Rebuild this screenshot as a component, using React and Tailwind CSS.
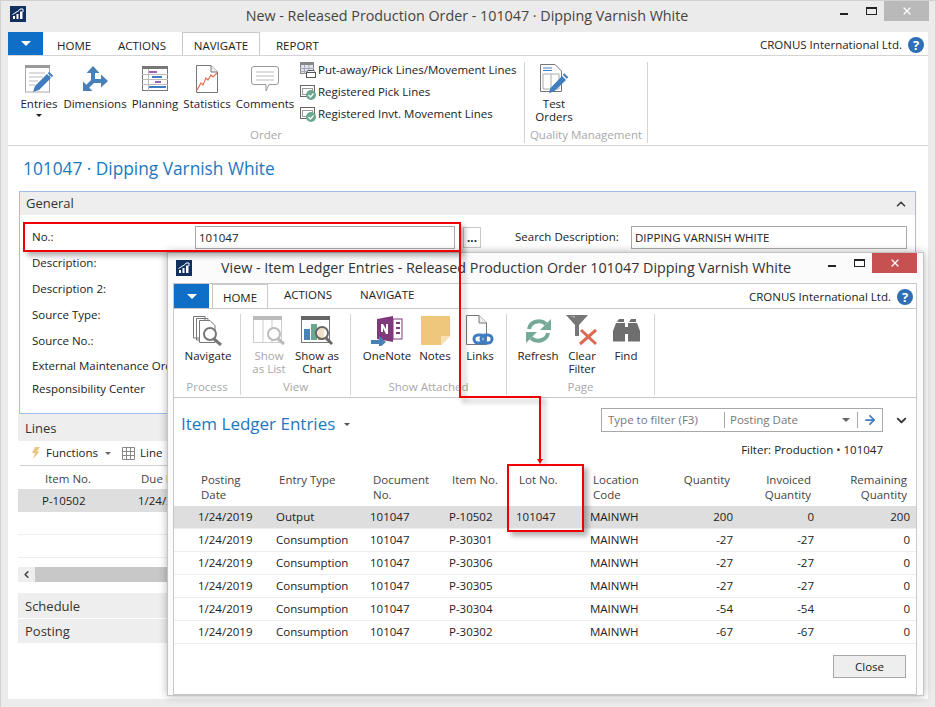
import { ChevronDown, ChevronUp, ChevronLeft, ArrowRight, X } from 'lucide-react';

const ROWS = [
  ['1/24/2019', 'Output', '101047', 'P-10502', '101047', 'MAINWH', '200', '0', '200'],
  ['1/24/2019', 'Consumption', '101047', 'P-30301', '', 'MAINWH', '-27', '-27', '0'],
  ['1/24/2019', 'Consumption', '101047', 'P-30306', '', 'MAINWH', '-27', '-27', '0'],
  ['1/24/2019', 'Consumption', '101047', 'P-30305', '', 'MAINWH', '-27', '-27', '0'],
  ['1/24/2019', 'Consumption', '101047', 'P-30304', '', 'MAINWH', '-54', '-54', '0'],
  ['1/24/2019', 'Consumption', '101047', 'P-30302', '', 'MAINWH', '-67', '-67', '0'],
];

const COLS = 'grid grid-cols-[78px_94px_79px_67px_74px_60px_83px_81px_96px] pl-[24px]';

function Logo() {
  return (
    <svg width="16" height="16" viewBox="0 0 16 16">
      <rect width="16" height="16" fill="#12305f" />
      <path d="M3 13V10H5V13ZM6.5 13V8H8.5V13ZM10 13V5.5H12.5V13Z" fill="#fff" />
      <path d="M2.5 8.5L9 4.5L10 3H13V6" stroke="#fff" strokeWidth="1" fill="none" />
    </svg>
  );
}

function Help() {
  return (
    <div className="w-4 h-4 rounded-full bg-[#2f6fb5] text-white text-[13px] font-bold leading-4 text-center">?</div>
  );
}

function WindowButtons({ closeColor }) {
  return (
    <div className="flex items-start h-[21px]">
      <div className="w-[8px] h-[2px] bg-[#222] mt-[12px] mr-[18px]" />
      <div className="w-[11px] h-[8px] border border-[#222] border-t-2 mt-[6px] mr-[7px]" />
      <div className={`${closeColor} w-[45px] h-[20px] flex items-center justify-center`}>
        <X size={12} strokeWidth={2.5} className="text-white" />
      </div>
    </div>
  );
}

function Entries() {
  return (
    <svg width="30" height="30" viewBox="0 0 30 30">
      <rect x="1.5" y="2" width="24" height="26" fill="#fff" stroke="#aaa" />
      <rect x="1" y="1" width="25" height="3" fill="#9a9a9a" />
      <path d="M5 9H21M5 13H19M5 17H14M5 21H11" stroke="#bbb" />
      <path d="M9 28L11 22L23 10L27 14L15 26Z" fill="#3f7cc0" />
      <path d="M24.5 8.5L28.5 12.5" stroke="#3f7cc0" strokeWidth="2" />
    </svg>
  );
}

function Dimensions() {
  return (
    <svg width="25" height="25" viewBox="0 0 25 25" fill="#4a80b8">
      <path d="M10 16V5M10 15H20M10 15L3 22" stroke="#4a80b8" strokeWidth="4" />
      <path d="M3.5 7L10 0L16.5 7Z" />
      <path d="M18 8.5L25 15L18 21.5Z" />
      <path d="M0 15.5V25H9.5Z" />
    </svg>
  );
}

function Planning() {
  return (
    <svg width="26" height="25" viewBox="0 0 26 25">
      <rect x="0.5" y="0.5" width="25" height="24" fill="#fff" stroke="#777" />
      <rect width="26" height="3" fill="#777" />
      <path d="M6.5 3V25M0 8.5H26M0 13.5H26M0 18.5H26" stroke="#bbb" />
      <rect x="7" y="5" width="8" height="2" fill="#9b62b8" />
      <rect x="10" y="10" width="10" height="2" fill="#3f7cc0" />
      <rect x="13" y="15" width="6" height="2" fill="#9b62b8" />
      <rect x="7" y="20" width="17" height="2" fill="#3f7cc0" />
    </svg>
  );
}

function Statistics() {
  return (
    <svg width="22" height="28" viewBox="0 0 22 28">
      <path d="M0.5 0.5H15L21.5 7V27.5H0.5Z" fill="#fff" stroke="#777" />
      <path d="M15 0.5V7H21.5" fill="#eee" stroke="#777" />
      <path d="M1 25L5 18L7 20L10 13L12 15L15 10L17 12L21 8" fill="none" stroke="#e07050" strokeWidth="1.2" />
    </svg>
  );
}

function Comments() {
  return (
    <svg width="28" height="26" viewBox="0 0 28 26">
      <path d="M3 0.5H25Q27.5 0.5 27.5 3V16Q27.5 18.5 25 18.5H18L15 25V18.5H3Q0.5 18.5 0.5 16V3Q0.5 0.5 3 0.5Z" fill="#fff" stroke="#999" />
      <path d="M5 6H23M5 10H23M5 14H23" stroke="#bbb" />
    </svg>
  );
}

function TestOrders() {
  return (
    <svg width="28" height="30" viewBox="0 0 28 30">
      <path d="M0.5 0.5H15L21.5 7V27.5H0.5Z" fill="#fff" stroke="#777" />
      <path d="M3 4H12M3 6.5H12" stroke="#3f7cc0" />
      <path d="M3 10H19V25H3ZM11 10V25" fill="none" stroke="#aaa" />
      <path d="M9 29L10.5 24L22 12L26 16L14 27.5Z" fill="#3f7cc0" />
      <path d="M23.5 10L27.5 14" stroke="#3f7cc0" strokeWidth="2" />
    </svg>
  );
}

function PutAway() {
  return (
    <svg width="16" height="16" viewBox="0 0 16 16">
      <rect x="0.5" y="0.5" width="13" height="11" fill="#dfe3ee" stroke="#888" />
      <rect width="14" height="3" fill="#888" />
      <path d="M4.5 3V12M9 3V12M0 6.5H14M0 9.5H14" stroke="#a9a9b8" />
      <rect x="6.5" y="10.5" width="9" height="5" fill="#fff" stroke="#555" />
      <rect x="8" y="8.5" width="6" height="2" fill="#fff" stroke="#555" />
    </svg>
  );
}

function Registered() {
  return (
    <svg width="16" height="16" viewBox="0 0 16 16">
      <rect x="0.5" y="1.5" width="14" height="11" fill="#fff" stroke="#666" />
      <rect x="2.5" y="4.5" width="10" height="6" fill="#fff" stroke="#999" />
      <circle cx="11" cy="11" r="5" fill="#6aa88f" />
      <path d="M8.5 11L10.5 13L13.5 9.5" fill="none" stroke="#fff" strokeWidth="1.2" />
    </svg>
  );
}

function Navigate() {
  return (
    <svg width="30" height="30" viewBox="0 0 30 30">
      <path d="M0.5 0.5H12V22H0.5ZM3.5 2.5H15V24H3.5Z" fill="#fff" stroke="#777" />
      <path d="M6.5 4.5H17L22 9.5V26.5H6.5Z" fill="#fff" stroke="#777" />
      <circle cx="17" cy="18" r="6" fill="#fff" stroke="#777" strokeWidth="2" />
      <path d="M21 23L28 29" stroke="#777" strokeWidth="3" />
    </svg>
  );
}

function ShowList() {
  return (
    <svg width="32" height="30" viewBox="0 0 32 30">
      <rect x="0.5" y="0.5" width="28" height="26" fill="#fff" stroke="#ccc" />
      <rect width="29" height="4" fill="#bbb" />
      <path d="M10 4V27M19 4V27" stroke="#ccc" />
      <circle cx="21" cy="18" r="6" fill="#fff" stroke="#bbb" strokeWidth="2" />
      <path d="M25 23L31 28" stroke="#bbb" strokeWidth="3" />
    </svg>
  );
}

function ShowChart() {
  return (
    <svg width="32" height="30" viewBox="0 0 32 30">
      <rect x="0.5" y="0.5" width="28" height="26" fill="#fff" stroke="#777" />
      <rect width="29" height="4" fill="#666" />
      <rect x="3" y="13" width="6" height="11" fill="#4a80b8" />
      <rect x="10" y="8" width="6" height="16" fill="#6aa88f" />
      <rect x="17" y="11" width="6" height="13" fill="#d8a55a" />
      <circle cx="21" cy="17" r="6" fill="#ffffffaa" stroke="#666" strokeWidth="2" />
      <path d="M25 22L31 28" stroke="#666" strokeWidth="3" />
    </svg>
  );
}

function OneNote() {
  return (
    <svg width="32" height="30" viewBox="0 0 32 30">
      <path d="M6 3L22 0V26L6 23Z" fill="#80397b" />
      <path d="M10 16V8H12L15 13V8H17V18H15L12 12V16Z" fill="#fff" />
      <rect x="22" y="3" width="9" height="20" fill="#fff" stroke="#80397b" />
      <path d="M25 7H29M25 12H29M25 17H29" stroke="#80397b" strokeWidth="2" />
      <path d="M0 24H8V20L15 26L8 32V28H0Z" fill="#4a80b8" />
    </svg>
  );
}

function Notes() {
  return (
    <svg width="29" height="29" viewBox="0 0 29 29">
      <path d="M0 0H29V20L20 29H0Z" fill="#eec77c" />
      <path d="M20 29V20H29Z" fill="#f8e2b4" />
    </svg>
  );
}

function Links() {
  return (
    <svg width="28" height="32" viewBox="0 0 28 32">
      <path d="M0.5 0.5H13L20.5 8V29.5H0.5Z" fill="#fff" stroke="#777" />
      <path d="M13 0.5V8H20.5" fill="#eee" stroke="#777" />
      <rect x="8" y="20" width="11" height="8" rx="4" fill="none" stroke="#3f7cc0" strokeWidth="3" />
      <rect x="15" y="20" width="11" height="8" rx="4" fill="none" stroke="#3f7cc0" strokeWidth="3" />
    </svg>
  );
}

function Refresh() {
  return (
    <svg width="27" height="26" viewBox="0 0 27 26">
      <path d="M4 11A10 9 0 0 1 21 6" fill="none" stroke="#74aa97" strokeWidth="4" />
      <path d="M23 15A10 9 0 0 1 6 20" fill="none" stroke="#74aa97" strokeWidth="4" />
      <path d="M26 1V12H15Z" fill="#74aa97" />
      <path d="M1 25V14H12Z" fill="#74aa97" />
    </svg>
  );
}

function ClearFilter() {
  return (
    <svg width="32" height="31" viewBox="0 0 32 31">
      <path d="M0 0H22L13 10V21H9V10Z" fill="#777" />
      <path d="M4 1H9V3Z" fill="#aaa" />
      <path d="M14 29L30 15M15 15L30 29" stroke="#dd6a50" strokeWidth="3" />
    </svg>
  );
}

function Find() {
  return (
    <svg width="27" height="24" viewBox="0 0 27 24" fill="#6e6e6e">
      <path d="M4 3H11V0H6ZM16 3H23V0H18Z" />
      <path d="M3 4H12V22.5H0V12ZM15 4H24L27 12V22.5H15ZM12 8H15V15H12Z" />
    </svg>
  );
}

function Big({ w, icon, label, muted, caret }) {
  return (
    <div className={`${w} flex flex-col items-center shrink-0`}>
      <div className="h-[31px] flex items-center justify-center">{icon}</div>
      <div className={`mt-[3px] text-center leading-[13px] whitespace-nowrap ${muted ? 'text-[#a8a8a8]' : 'text-[#222]'}`}>{label}</div>
      {caret && <div className="mt-[4px] w-0 h-0 border-x-[3px] border-x-transparent border-t-[3px] border-t-[#222]" />}
    </div>
  );
}

function Group({ w, pl, label, children }) {
  return (
    <div className={`${w} shrink-0 h-full border-r border-[#d4d4d4] flex flex-col`}>
      <div className={`${pl} flex flex-1 pt-[1px]`}>{children}</div>
      <div className="text-center text-[#a8a8a8] leading-[15px] pb-[1px] whitespace-nowrap">{label}</div>
    </div>
  );
}

function SmallAction({ icon, label }) {
  return (
    <div className="flex items-center h-[22px] text-[#222]">
      <span className="w-[18px] shrink-0">{icon}</span>
      <span className="whitespace-nowrap">{label}</span>
    </div>
  );
}

function FormRow({ label, h = 'h-[26px]', children }) {
  return (
    <div className={`${h} flex items-center text-[#222]`}>
      <div className="w-[164px] pl-[1px] whitespace-nowrap overflow-hidden">{label}</div>
      {children}
    </div>
  );
}

function ItemLedgerWindow() {
  return (
    <div className="absolute left-[166px] top-[251px] w-[757px] h-[444px] bg-[#fbfbfb] border border-[#c4c4c4] shadow-[0_0_8px_rgba(0,0,0,0.3)] flex flex-col">
      <div className="h-[30px] flex justify-between shrink-0">
        <div className="flex items-center pl-[8px]">
          <Logo />
          <span className="ml-[29px] text-[14.3px] text-[#333] whitespace-nowrap">View - Item Ledger Entries - Released Production Order 101047 Dipping Varnish White</span>
        </div>
        <div className="pr-[6px]"><WindowButtons closeColor="bg-[#c75050]" /></div>
      </div>
      <div className="ml-[5px] mr-[6px] flex-1 border border-[#c8c8c8] bg-white flex flex-col">
        <div className="h-[24px] flex items-end justify-between shrink-0">
          <div className="flex items-end h-full">
            <div className="w-[35px] h-full bg-[#0f6fc6] flex items-center justify-center">
              <div className="w-0 h-0 border-x-[5px] border-x-transparent border-t-[5px] border-t-white" />
            </div>
            <div className="ml-[3px] w-[56px] h-full bg-white border border-b-0 border-[#c8c8c8] text-center leading-[26px] text-[#222]">HOME</div>
            <div className="ml-[16px] w-[49px] whitespace-nowrap leading-[26px] text-[#222]">ACTIONS</div>
            <div className="ml-[27px] whitespace-nowrap leading-[26px] text-[#222]">NAVIGATE</div>
          </div>
          <div className="flex items-center h-full pt-[2px] pr-[3px] text-[#222]">
            <span className="mr-[6px]">CRONUS International Ltd.</span>
            <Help />
          </div>
        </div>
        <div className="h-[90px] shrink-0 border-y border-[#c8c8c8] flex pt-[5px] pb-[2px]">
          <Group w="w-[67px]" pl="pl-[10px]" label="Process">
            <Big w="w-[48px]" icon={<Navigate />} label="Navigate" />
          </Group>
          <Group w="w-[110px]" pl="pl-[4px]" label="View">
            <Big w="w-[48px]" muted icon={<ShowList />} label={<>Show<br />as List</>} />
            <Big w="w-[48px]" icon={<ShowChart />} label={<>Show as<br />Chart</>} />
          </Group>
          <Group w="w-[156px]" pl="pl-[12px]" label="Show Attached">
            <Big w="w-[48px]" icon={<OneNote />} label="OneNote" />
            <Big w="w-[48px]" icon={<Notes />} label="Notes" />
            <Big w="w-[42px]" icon={<Links />} label="Links" />
          </Group>
          <Group w="w-[148px]" pl="pl-[8px]" label="Page">
            <Big w="w-[46px]" icon={<Refresh />} label="Refresh" />
            <Big w="w-[42px]" icon={<ClearFilter />} label={<>Clear<br />Filter</>} />
            <Big w="w-[46px]" icon={<Find />} label="Find" />
          </Group>
        </div>
        <div className="flex items-center justify-between h-[24px] mt-[10px] shrink-0">
          <div className="flex items-center pl-[7px] pt-[8px]">
            <span className="text-[17px] text-[#1c78c0] leading-[24px]">Item Ledger Entries</span>
            <div className="ml-[9px] w-0 h-0 border-x-[3px] border-x-transparent border-t-[3px] border-t-[#555]" />
          </div>
          <div className="flex items-center pr-[7px]">
            <div className="w-[282px] h-[24px] border border-[#a8a8a8] flex items-center text-[#777]">
              <span className="w-[123px] pl-[6px] border-r border-[#a8a8a8] leading-[16px] whitespace-nowrap">Type to filter (F3)</span>
              <span className="w-[133px] pl-[5px] border-r border-[#a8a8a8] leading-[16px] flex items-center justify-between pr-[7px]">
                Posting Date
                <span className="w-0 h-0 border-x-[4px] border-x-transparent border-t-[4px] border-t-[#666]" />
              </span>
              <ArrowRight size={14} strokeWidth={3} className="ml-[5px] text-[#3f7cc0]" />
            </div>
            <ChevronDown size={15} strokeWidth={3} className="ml-[11px] text-[#333]" />
          </div>
        </div>
        <div className="h-[18px] mt-[9px] mb-[13px] pr-[33px] text-right leading-[18px] text-[#222] shrink-0">Filter: Production • 101047</div>
        <div className={`${COLS} h-[34px] leading-[15px] text-[#444] shrink-0`}>
          <div className="pl-[3px]">Posting<br />Date</div>
          <div className="pl-[3px]">Entry Type</div>
          <div className="pl-[3px]">Document<br />No.</div>
          <div className="pl-[3px]">Item No.</div>
          <div className="pl-[3px]">Lot No.</div>
          <div className="pl-[3px]">Location<br />Code</div>
          <div className="pr-[3px] text-right">Quantity</div>
          <div className="pr-[3px] text-right">Invoiced<br />Quantity</div>
          <div className="pr-[3px] text-right">Remaining<br />Quantity</div>
        </div>
        <div className="shrink-0">
          {ROWS.map((r, i) => (
            <div key={r[3]} className={`${COLS} h-[23px] items-center border-b border-[#eeeeee] text-[#222] ${i === 0 ? 'bg-[#dedede]' : ''}`}>
              {r.map((c, j) => (
                <div key={j} className={j > 5 ? 'text-right' : ''}>{c}</div>
              ))}
            </div>
          ))}
        </div>
        <div className="flex justify-end pr-[10px] mt-[11px]">
          <div className="w-[73px] h-[23px] bg-[#eeeeee] border border-[#a8a8a8] text-center leading-[21px] text-[#222]">Close</div>
        </div>
      </div>
    </div>
  );
}

function Annotations() {
  const red = 'absolute bg-[#f00000] shadow-[4px_4px_5px_rgba(0,0,0,0.3)]';
  return (
    <>
      <div className="absolute left-[22px] top-[221px] w-[438px] h-[30px] border-2 border-[#f00000] shadow-[4px_4px_5px_rgba(0,0,0,0.3)]" />
      <div className={`${red} left-[458px] top-[249px] w-[2px] h-[148px]`} />
      <div className={`${red} left-[458px] top-[395px] w-[82px] h-[2px]`} />
      <div className={`${red} left-[538px] top-[395px] w-[2px] h-[66px]`} />
      <div className="absolute left-[536px] top-[458px] w-0 h-0 border-x-[3px] border-x-transparent border-t-[5px] border-t-[#f00000]" />
      <div className="absolute left-[506px] top-[463px] w-[77px] h-[68px] border-[2px] border-[#f00000] shadow-[4px_4px_5px_rgba(0,0,0,0.3)]" />
    </>
  );
}

export default function App() {
  return (
    <div className="relative w-[935px] h-[707px] overflow-hidden bg-[#ebebeb] border-t border-l border-[#d0d0d0] text-[11.5px] font-['Open_Sans',sans-serif] flex flex-col">
      <div className="h-[31px] flex justify-between shrink-0">
        <div className="pl-[9px] pt-[5px]"><Logo /></div>
        <div className="flex-1 text-center text-[14.3px] leading-[30px] text-[#444] pl-[68px]">New - Released Production Order - 101047 · Dipping Varnish White</div>
        <div className="pr-[6px]"><WindowButtons closeColor="bg-[#b9b9b9]" /></div>
      </div>
      <div className="ml-[7px] mr-[7px] h-[667px] bg-white flex flex-col">
        <div className="h-[23px] flex justify-between shrink-0">
          <div className="flex h-full">
            <div className="w-[35px] h-full bg-[#0f6fc6] flex items-center justify-center">
              <div className="w-0 h-0 border-x-[5px] border-x-transparent border-t-[5px] border-t-white" />
            </div>
            <div className="ml-[14px] w-[34px] whitespace-nowrap leading-[28px] text-[#222]">HOME</div>
            <div className="ml-[27px] w-[49px] whitespace-nowrap leading-[28px] text-[#222]">ACTIONS</div>
            <div className="ml-[15px] w-[78px] border border-b-0 border-[#c8c8c8] text-center leading-[26px] text-[#222]">NAVIGATE</div>
            <div className="ml-[16px] whitespace-nowrap leading-[28px] text-[#222]">REPORT</div>
          </div>
          <div className="flex items-center pt-[2px] pr-[4px] text-[#222]">
            <span className="mr-[6px]">CRONUS International Ltd.</span>
            <Help />
          </div>
        </div>
        <div className="h-[91px] shrink-0 border-y border-[#d4d4d4] flex pt-[6px] pb-[2px]">
          <Group w="w-[517px]" pl="pl-[10px]" label="Order">
            <Big w="w-[42px]" icon={<Entries />} label="Entries" caret />
            <Big w="w-[70px]" icon={<Dimensions />} label="Dimensions" />
            <Big w="w-[50px]" icon={<Planning />} label="Planning" />
            <Big w="w-[54px]" icon={<Statistics />} label="Statistics" />
            <Big w="w-[62px]" icon={<Comments />} label="Comments" />
            <div className="ml-[4px] -mt-[4px]">
              <SmallAction icon={<PutAway />} label="Put-away/Pick Lines/Movement Lines" />
              <SmallAction icon={<Registered />} label="Registered Pick Lines" />
              <SmallAction icon={<Registered />} label="Registered Invt. Movement Lines" />
            </div>
          </Group>
          <Group w="w-[123px]" pl="pl-[6px]" label="Quality Management">
            <Big w="w-[46px]" icon={<TestOrders />} label={<>Test<br />Orders</>} />
          </Group>
        </div>
        <div className="px-[11px] flex-1">
          <div className="h-[45px] pl-[4px] pt-[10px] text-[17.3px] text-[#1c78c0] leading-[26px]">101047 · Dipping Varnish White</div>
          <div className="w-[897px] border border-[#9cc0ee] pb-[13px]">
            <div className="h-[23px] bg-[#eeeeee] px-[6px] flex items-center justify-between text-[13px] text-[#333]">
              General
              <ChevronUp size={14} strokeWidth={3} className="text-[#444] mr-[1px]" />
            </div>
            <div className="pt-[9px] pl-[11px]">
              <FormRow label="No.:">
                <div className="w-[260px] h-[23px] border border-[#a8a8a8] pl-[3px] leading-[21px]">101047</div>
                <div className="ml-[8px] w-[18px] h-[21px] border border-[#c8c8c8] text-center font-bold leading-[20px]">...</div>
                <div className="ml-[34px] w-[116px] text-[#222]">Search Description:</div>
                <div className="w-[276px] h-[23px] border border-[#a8a8a8] pl-[3px] leading-[21px]">DIPPING VARNISH WHITE</div>
              </FormRow>
              <FormRow label="Description:" />
              <FormRow label="Description 2:" />
              <FormRow label="Source Type:" />
              <FormRow label="Source No.:" />
              <FormRow label="External Maintenance Order" h="h-[24px]" />
              <FormRow label="Responsibility Center" h="h-[22px]" />
            </div>
          </div>
          <div className="w-[898px] -ml-[1px]">
            <div className="h-[27px] pt-[3px] bg-[#eeeeee] pl-[7px] flex items-center text-[13px] text-[#333]">Lines</div>
            <div className="h-[25px] ml-[2px] border-b border-[#d0d0d0] flex items-center text-[#222]">
              <svg width="9" height="12" viewBox="0 0 9 12" className="ml-[11px]"><path d="M4 0H9L6 4.5H8.5L2 12L4 6H1Z" fill="#eac684" /></svg>
              <span className="ml-[6px]">Functions</span>
              <span className="ml-[7px] w-0 h-0 border-x-[3px] border-x-transparent border-t-[3px] border-t-[#666]" />
              <svg width="13" height="13" viewBox="0 0 13 13" className="ml-[11px]"><path d="M0.5 0.5H12.5V12.5H0.5ZM0.5 4.5H12.5M0.5 8.5H12.5M4.5 0.5V12.5M8.5 0.5V12.5" fill="none" stroke="#888" /></svg>
              <span className="ml-[5px]">Line</span>
            </div>
            <div className="h-[23px] pt-[3px] flex items-center text-[#444]">
              <span className="ml-[27px] w-[96px]">Item No.</span>
              <span>Due Date</span>
            </div>
            <div className="h-[23px] bg-[#dedede] flex items-center text-[#222]">
              <span className="ml-[24px] w-[96px]">P-10502</span>
              <span>1/24/2019</span>
            </div>
            <div className="h-[23px] border-b border-[#eeeeee]" />
            <div className="h-[23px] border-b border-[#eeeeee]" />
            <div className="h-[15px] mt-[9px] bg-[#eeeeee] flex">
              <div className="w-[17px] flex items-center justify-center"><ChevronLeft size={11} strokeWidth={3.5} className="text-[#444]" /></div>
              <div className="flex-1 bg-[#c8c8c8]" />
            </div>
            <div className="mt-[11px] h-[25px] pt-[2px] bg-[#eeeeee] pl-[7px] flex items-center text-[13px] text-[#333]">Schedule</div>
            <div className="mt-[1px] h-[24px] pt-[2px] bg-[#eeeeee] pl-[7px] flex items-center text-[13px] text-[#333]">Posting</div>
          </div>
        </div>
      </div>
      <ItemLedgerWindow />
      <Annotations />
    </div>
  );
}
